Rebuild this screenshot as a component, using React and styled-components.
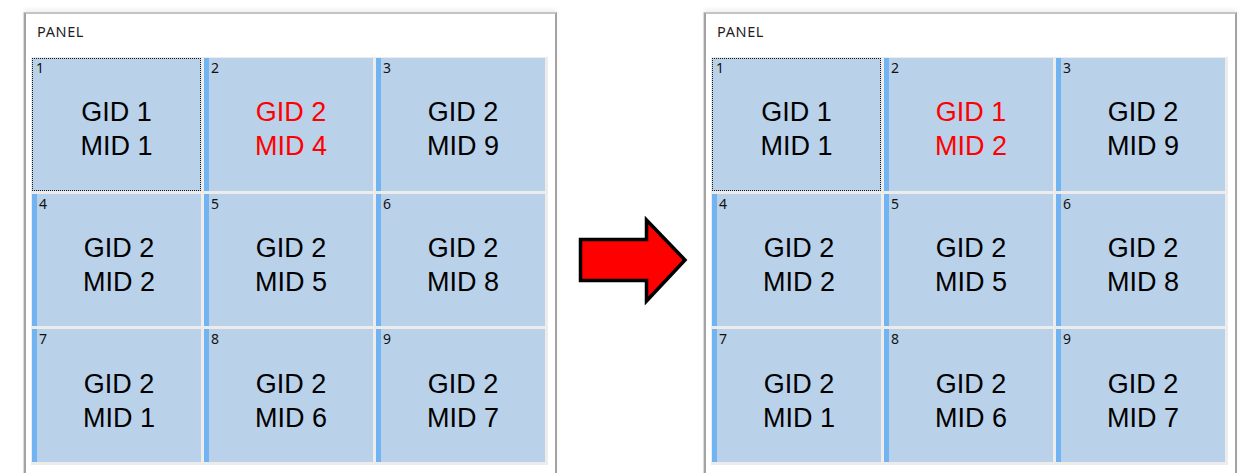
import React from 'react';
import styled, { createGlobalStyle } from 'styled-components';

const GlobalStyle = createGlobalStyle`
  html, body {
    margin: 0;
    padding: 0;
    background: #ffffff;
    overflow: hidden;
  }
`;

const Page = styled.div`
  display: flex;
  align-items: flex-start;
  padding: 12px 0 0 24px;
  width: 1242px;
  height: 473px;
  box-sizing: border-box;
`;

const Panel = styled.section`
  width: 533px;
  height: 480px;
  box-sizing: border-box;
  border: 2px solid #a3a3a3;
  border-top-color: #c4c4c4;
  background: #fff;
  box-shadow: 0 -3px 4px rgba(0, 0, 0, 0.06), -1px 0 0 #e2e2e2;
  flex-shrink: 0;
`;

const PanelTitle = styled.div`
  height: 43px;
  box-sizing: border-box;
  padding: 9px 0 0 11px;
  font-family: 'Noto Sans', 'Open Sans', sans-serif;
  font-size: 14.5px;
  letter-spacing: 0.6px;
  line-height: 16px;
  color: #1e1e1e;
`;

const Grid = styled.div`
  margin-left: 5px;
  width: 517px;
  box-sizing: border-box;
  padding: 1px 3px 3px 1px;
  display: grid;
  grid-template-columns: repeat(3, 1fr);
  grid-auto-rows: 132.67px;
  gap: 3px;
  background: #ececec;
`;

const Cell = styled.div`
  display: flex;
  flex-direction: column;
  background: #bad1ea;
  border-left: ${(p) => (p.$focused ? '0' : '5px solid #72b3f1')};
  outline: ${(p) => (p.$focused ? '1px dotted #1a1a1a' : 'none')};
  outline-offset: -1px;
  min-width: 0;
`;

const CellIndex = styled.div`
  padding: 2px 0 0 ${(p) => (p.$focused ? '4px' : '2px')};
  font-family: 'Noto Sans', 'Open Sans', sans-serif;
  font-size: 14px;
  line-height: 15px;
  color: #111;
`;

const CellBody = styled.div`
  flex: 1;
  display: flex;
  flex-direction: column;
  align-items: center;
  justify-content: center;
  padding-bottom: 7px;
  font-family: 'Liberation Sans', Arial, sans-serif;
  font-size: 27px;
  line-height: 34px;
  color: ${(p) => (p.$highlight ? '#ff0000' : '#000000')};
`;

const ArrowWrap = styled.div`
  margin: 204px 14px 0 21px;
  width: 112px;
  height: 90px;
  flex-shrink: 0;
`;

const leftCells = [
  ['1', '1'], ['2', '4', true], ['2', '9'],
  ['2', '2'], ['2', '5'], ['2', '8'],
  ['2', '1'], ['2', '6'], ['2', '7'],
];

const rightCells = [
  ['1', '1'], ['1', '2', true], ['2', '9'],
  ['2', '2'], ['2', '5'], ['2', '8'],
  ['2', '1'], ['2', '6'], ['2', '7'],
];

function GridPanel({ cells }) {
  return (
    <Panel>
      <PanelTitle>PANEL</PanelTitle>
      <Grid>
        {cells.map(([gid, mid, hl], i) => (
          <Cell key={i} $focused={i === 0}>
            <CellIndex $focused={i === 0}>{i + 1}</CellIndex>
            <CellBody $highlight={hl}>
              <span>GID {gid}</span>
              <span>MID {mid}</span>
            </CellBody>
          </Cell>
        ))}
      </Grid>
    </Panel>
  );
}

function Arrow() {
  return (
    <ArrowWrap>
      <svg width="112" height="90" viewBox="0 0 112 90">
        <polygon
          points="2.5,23.5 68.5,23.5 68.5,4 107,44 68.5,85 68.5,64.5 2.5,64.5"
          fill="#ff0000"
          stroke="#000"
          strokeWidth="3.5"
          strokeLinejoin="miter"
        />
      </svg>
    </ArrowWrap>
  );
}

export default function App() {
  return (
    <>
      <GlobalStyle />
      <Page>
        <GridPanel cells={leftCells} />
        <Arrow />
        <GridPanel cells={rightCells} />
      </Page>
    </>
  );
}
